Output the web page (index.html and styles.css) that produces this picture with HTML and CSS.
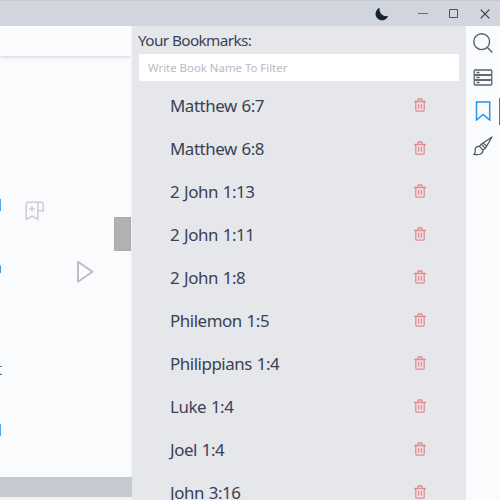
FILE: index.html
```html
<!DOCTYPE html>
<html lang="en">
<head>
<meta charset="utf-8">
<title>Bookmarks</title>
<link rel="stylesheet" href="styles.css">
</head>
<body>
<div class="app">
  <header class="titlebar">
    <svg class="moon" width="14" height="14" viewBox="0 0 14 14"><path d="M4.6.8A6.5 6.5 0 1 0 13.2 8.8C9 10.4 3.8 6.5 4.6.8Z" fill="#1a2036"/></svg>
    <svg width="10" height="10" viewBox="0 0 10 10"><path d="M0 4.5h10" stroke="#666a72"/></svg>
    <svg width="10" height="10" viewBox="0 0 10 10"><path d="M.5.5h8v8h-8z" fill="none" stroke="#50545e"/></svg>
    <svg width="10" height="10" viewBox="0 0 10 10"><path d="m.7.7 8.6 8.6m0-8.6L.7 9.3" stroke="#30343e" stroke-width="1.1"/></svg>
  </header>
  <main class="body">
    <section class="reader">
      <div class="toolbar"></div>
      <div class="verses">
        <span class="edge edge-a">d</span>
        <span class="edge edge-b">n</span>
        <span class="edge edge-c">t</span>
        <span class="edge edge-d">d</span>
        <svg class="add" width="20" height="20" viewBox="0 0 20 20" fill="none" stroke="#cccdd5" stroke-width="1.5"><path d="M1.2 18.5V3.2Q1.2 1.2 3.2 1.2h13q2 0 2 2v6.6h-5M12.8 1.5v17L7 15.2l-5.8 3.3M12.8 3.4q0-2.2 2-2.2M4.2 7.7h5.6M7 4.9v5.6"/></svg>
        <svg class="play" width="18" height="24" viewBox="0 0 18 24"><path d="M2 1.8v20L16.5 11.8z" fill="none" stroke="#bcbdc5" stroke-width="2" stroke-linejoin="round"/></svg>
        <div class="thumb"></div>
      </div>
      <div class="divider"></div>
      <div class="footer"></div>
    </section>
    <section class="panel">
      <h1>Your Bookmarks:</h1>
      <input class="filter" type="text" placeholder="Write Book Name To Filter">
      <ul class="list">
        <li><span>Matthew 6:7</span><svg class="bin"><use href="#trash"/></svg></li>
        <li><span>Matthew 6:8</span><svg class="bin"><use href="#trash"/></svg></li>
        <li><span>2 John 1:13</span><svg class="bin"><use href="#trash"/></svg></li>
        <li><span>2 John 1:11</span><svg class="bin"><use href="#trash"/></svg></li>
        <li><span>2 John 1:8</span><svg class="bin"><use href="#trash"/></svg></li>
        <li><span>Philemon 1:5</span><svg class="bin"><use href="#trash"/></svg></li>
        <li><span>Philippians 1:4</span><svg class="bin"><use href="#trash"/></svg></li>
        <li><span>Luke 1:4</span><svg class="bin"><use href="#trash"/></svg></li>
        <li><span>Joel 1:4</span><svg class="bin"><use href="#trash"/></svg></li>
        <li><span>John 3:16</span><svg class="bin"><use href="#trash"/></svg></li>
      </ul>
    </section>
    <nav class="rail">
      <div class="tool"><svg width="20" height="20" viewBox="0 0 20 20" fill="none" stroke="#5b5f6d" stroke-width="1.4"><circle cx="8.7" cy="8.7" r="7.9"/><path d="m14.4 14.4 5 5"/></svg></div>
      <div class="tool"><svg width="20" height="18" viewBox="0 0 20 18" fill="none" stroke="#5b5f6d" stroke-width="1.3"><rect x="1.2" y="1" width="17.6" height="5" rx="1"/><rect x="1.2" y="6" width="17.6" height="5" rx="1"/><rect x="1.2" y="11" width="17.6" height="5" rx="1"/><path d="M3.5 3.5h3m-3 5h3m-3 5h3"/></svg></div>
      <div class="tool active"><svg width="16" height="20" viewBox="0 0 16 20"><path d="M1.5 1h13.2v18l-6.6-5.5L1.5 19z" fill="none" stroke="#2196ee" stroke-width="1.5"/></svg></div>
      <div class="tool"><svg width="20" height="20" viewBox="0 0 20 20" fill="none" stroke="#4f5361" stroke-width="1.2" stroke-linejoin="round"><path d="M19 1 8.3 8.2l4 4.2zM10.2 7l3.7 3.4M8.3 8.2l-1.9 2.2 3.6 3.8 2.3-1.8M6.4 10.4c-3.6-.2-4.6 1.8-4.2 4.6.1 1.4-.4 2.6-1.4 3.4 4.6.8 9.3.2 9.2-4.2"/></svg></div>
    </nav>
  </main>
</div>
<svg class="defs"><symbol id="trash" viewBox="0 0 12 14"><path d="M0 3.5h12M3.5 3.5l.8-2.5h3.4l.8 2.5M1.8 3.5v8.4q0 1.3 1.3 1.3h5.8q1.3 0 1.3-1.3V3.5M4.6 5.8v5M7.4 5.8v5" fill="none" stroke="#e58a91" stroke-width="1.3"/></symbol></svg>
</body>
</html>
```
FILE: styles.css
```css
* { box-sizing: border-box; }
body { margin: 0; font-family: "Noto Sans", "Open Sans", sans-serif; }
.defs { display: none; }
.app { width: 500px; height: 500px; overflow: hidden; display: flex; flex-direction: column; background: #e5e7eb; }
.titlebar { height: 26px; flex: none; display: flex; align-items: center; justify-content: flex-end; gap: 21px; padding-right: 10px; background: #d1d5dd; border-top: 1px solid #c5c9d2; }
.moon { margin-right: 8px; }
.body { flex: 1; min-height: 0; display: flex; }
.reader { width: 132px; display: flex; flex-direction: column; background: #fafbfd; border-right: 1px solid #f0f1f4; }
.toolbar { height: 30px; flex: none; background: #fbfcfe; box-shadow: 0 1px 4px #d0d2d6; clip-path: inset(0 0 -8px 0); }
.verses { position: relative; height: 421px; flex: none; overflow: hidden; }
.edge { position: absolute; right: 129px; font-size: 17px; line-height: 20px; color: #3470b5; }
.edge-a { top: 139px; }
.edge-b { top: 201px; }
.edge-c { top: 303px; color: #45566b; }
.edge-d { top: 364px; }
.add { position: absolute; left: 25px; top: 145px; }
.play { position: absolute; left: 76px; top: 204px; }
.thumb { position: absolute; right: 0; top: 161px; width: 17px; height: 34px; background: #b0b2b2; border: 1px solid #a8aaab; }
.divider { height: 20px; flex: none; margin-right: -1px; background: #c5c9d2; }
.footer { flex: 1; background: #f1f2f4; }
.panel { width: 334px; padding: 3px 7px 0; color: #3b4156; background: #e5e7eb; overflow: hidden; }
h1 { margin: 0 0 3px -1px; font-size: 15.3px; line-height: 22px; font-weight: 400; letter-spacing: -.6px; }
.filter { display: block; width: 320px; height: 27px; padding: 0 9px; border: 0; font: 11.4px "Noto Sans", sans-serif; background: #fff; }
.filter::placeholder { color: #b9babf; opacity: 1; }
.list { margin: 3.4px 0 0; padding: 0; list-style: none; }
.list li { height: 42.95px; display: flex; align-items: center; justify-content: space-between; padding: 0 33px 0 31px; font-size: 16.9px; letter-spacing: -.45px; word-spacing: .9px; }
.bin { width: 12px; height: 14px; margin-top: -1px; }
.rail { width: 34px; display: flex; flex-direction: column; background: #fafbfd; }
.tool { height: 34.4px; display: flex; align-items: center; justify-content: center; }
.active { border-right: 1px solid #237fc0; height: 27px; margin: 3px 0 4px; }
```
